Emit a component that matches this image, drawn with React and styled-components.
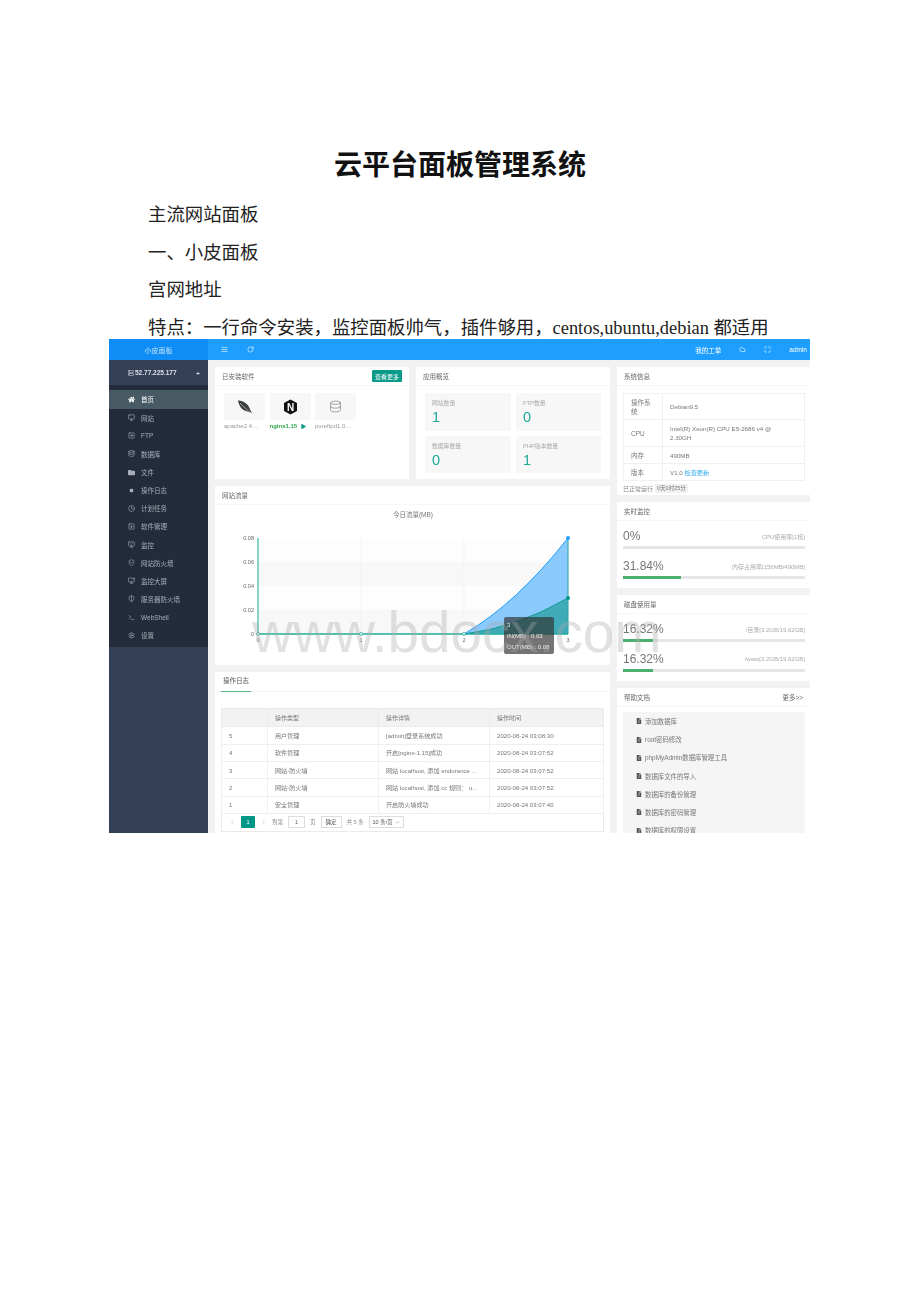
import styled, { createGlobalStyle } from "styled-components";
import { FaHome, FaFolder, FaCircle, FaCaretUp, FaPlay, FaFileAlt } from "react-icons/fa";
import {
  AlignJustify,
  RotateCw,
  Cloud,
  Maximize,
  Monitor,
  SquareArrowRight,
  Database,
  Clock,
  SquareArrowDown,
  MonitorCheck,
  ShieldCheck,
  MonitorDot,
  ShieldHalf,
  Terminal,
  Settings,
  Server,
  ChevronLeft,
  ChevronRight,
  ChevronDown,
} from "lucide-react";

const menu = [
  { label: "首页", icon: <FaHome />, active: true },
  { label: "网站", icon: <Monitor /> },
  { label: "FTP", icon: <SquareArrowRight /> },
  { label: "数据库", icon: <Database /> },
  { label: "文件", icon: <FaFolder /> },
  { label: "操作日志", icon: <FaCircle transform="scale(0.6)" /> },
  { label: "计划任务", icon: <Clock /> },
  { label: "软件管理", icon: <SquareArrowDown /> },
  { label: "监控", icon: <MonitorCheck /> },
  { label: "网站防火墙", icon: <ShieldCheck /> },
  { label: "监控大屏", icon: <MonitorDot /> },
  { label: "服务器防火墙", icon: <ShieldHalf /> },
  { label: "WebShell", icon: <Terminal /> },
  { label: "设置", icon: <Settings /> },
];

const logs = [
  ["5", "用户管理", "[admin]登录系统成功", "2020-08-24 03:08:30"],
  ["4", "软件管理", "开启[nginx-1.15]成功", "2020-08-24 03:07:52"],
  ["3", "网站-防火墙", "网站 localhost, 添加 endurance ...", "2020-08-24 03:07:52"],
  ["2", "网站-防火墙", "网站 localhost, 添加 cc 规则： u...", "2020-08-24 03:07:52"],
  ["1", "安全管理", "开启防火墙成功", "2020-08-24 03:07:40"],
];

const docs = [
  "添加数据库",
  "root密码修改",
  "phpMyAdmin数据库管理工具",
  "数据库文件的导入",
  "数据库的备份管理",
  "数据库的密码管理",
  "数据库的权限设置",
];

const stats = [
  ["网站数量", "1"],
  ["FTP数量", "0"],
  ["数据库数量", "0"],
  ["PHP版本数量", "1"],
];

function Meter({ value, label, percent, bar }) {
  return (
    <MeterBlock>
      <MeterRow>
        <MeterValue>{value}</MeterValue>
        <MeterLabel>{label}</MeterLabel>
      </MeterRow>
      <MeterTrack>
        <MeterFill style={{ width: bar ?? percent }} />
      </MeterTrack>
    </MeterBlock>
  );
}

function TrafficChart() {
  const xs = [258, 361, 464, 568];
  const ys = [
    [538, "0.08"],
    [562, "0.06"],
    [586, "0.04"],
    [610, "0.02"],
    [634, "0"],
  ];
  return (
    <ChartSvg viewBox="215 505 395 160">
      <rect x="258" y="538" width="310" height="24" fill="#fdfdfd" />
      <rect x="258" y="562" width="310" height="24" fill="#f8f8f8" />
      <rect x="258" y="586" width="310" height="24" fill="#fdfdfd" />
      <rect x="258" y="610" width="310" height="24" fill="#f8f8f8" />
      {xs.map((x) => (
        <line key={x} x1={x} x2={x} y1="538" y2="634" stroke="#f0f0f0" strokeWidth="0.6" />
      ))}
      <text x="413" y="517" textAnchor="middle" fontSize="6.5" fill="#777">
        今日流量(MB)
      </text>
      {ys.map(([y, label]) => (
        <text key={label} x="254" y={y + 2} textAnchor="end" fontSize="5.5" fill="#666">
          {label}
        </text>
      ))}
      {xs.map((x, i) => (
        <text key={x} x={x} y="642" textAnchor="middle" fontSize="5.5" fill="#666">
          {i}
        </text>
      ))}
      <path d="M464 634 Q516 604 568 538 L568 634 Z" fill="#8ac9fb" />
      <path d="M464 634 Q516 628 568 598 L568 634 Z" fill="#3faab8" />
      <path d="M464 634 Q516 604 568 538" fill="none" stroke="#1e9fff" strokeWidth="1" />
      <path d="M464 634 Q516 628 568 598" fill="none" stroke="#0f9a8c" strokeWidth="1" />
      <line x1="568" x2="568" y1="538" y2="634" stroke="#2aa6a0" strokeWidth="1" />
      <line x1="258" x2="258" y1="538" y2="634" stroke="#62c5b6" strokeWidth="1.5" />
      <line x1="258" x2="568" y1="634" y2="634" stroke="#1fab9c" strokeWidth="1.4" />
      {xs.slice(0, 3).map((x) => (
        <circle key={x} cx={x} cy="634" r="1.5" fill="#fff" stroke="#1fab9c" strokeWidth="0.8" />
      ))}
      <circle cx="568" cy="538" r="2" fill="#1e9fff" />
      <circle cx="568" cy="598" r="2" fill="#009688" />
    </ChartSvg>
  );
}

export default function App() {
  return (
    <Page>
      <GlobalStyle />
      <Title>云平台面板管理系统</Title>
      <Paragraph>主流网站面板</Paragraph>
      <Paragraph>一、小皮面板</Paragraph>
      <Paragraph>宫网地址</Paragraph>
      <Paragraph>特点：一行命令安装，监控面板帅气，插件够用，centos,ubuntu,debian 都适用</Paragraph>

      <Shot>
        <TopBar>
          <Logo>小皮面板</Logo>
          <TopNav>
            <TopIcons>
              <AlignJustify />
              <RotateCw />
            </TopIcons>
            <TopLinks>
              <span>我的工单</span>
              <Cloud />
              <Maximize />
              <span>admin</span>
            </TopLinks>
          </TopNav>
        </TopBar>

        <Body>
          <Sidebar>
            <UserBlock>
              <UserIp>
                <Server />
                52.77.225.177
              </UserIp>
              <FaCaretUp />
            </UserBlock>
            <MenuList>
              {menu.map((item) => (
                <MenuItem key={item.label} $active={item.active}>
                  {item.icon}
                  <span>{item.label}</span>
                </MenuItem>
              ))}
            </MenuList>
          </Sidebar>

          <Main>
            <LeftColumn>
              <TopRow>
                <Card>
                  <CardHead>
                    已安装软件
                    <MoreButton>查看更多</MoreButton>
                  </CardHead>
                  <Tiles>
                    <Software>
                      <Tile>
                        <svg width="16" height="16" viewBox="0 0 16 16">
                          <path d="M1 1.5C5 1.5 10 4 12 8c1 2 1.5 3.5 3 6.5-2.5-1.5-4-2-6-2.5C5 11 2 7 1 1.5Z" fill="#3a3f3f" />
                          <path d="M3 4c3 3 6 6 11 10" stroke="#fff" strokeWidth="0.5" fill="none" />
                        </svg>
                      </Tile>
                      <SoftName>apache2.4....</SoftName>
                    </Software>
                    <Software>
                      <Tile>
                        <svg width="15" height="16" viewBox="0 0 15 16">
                          <polygon points="7.5,0.5 14,4 14,12 7.5,15.5 1,12 1,4" fill="#111" />
                          <text x="7.5" y="11.5" textAnchor="middle" fontSize="10" fontWeight="700" fill="#fff">
                            N
                          </text>
                        </svg>
                      </Tile>
                      <SoftName $running>
                        nginx1.15 <FaPlay />
                      </SoftName>
                    </Software>
                    <Software>
                      <Tile>
                        <Database size={13} strokeWidth={1.2} color="#777" />
                      </Tile>
                      <SoftName>pureftpd1.0....</SoftName>
                    </Software>
                  </Tiles>
                </Card>

                <Card>
                  <CardHead>应用概览</CardHead>
                  <StatGrid>
                    {stats.map(([label, value]) => (
                      <StatTile key={label}>
                        <StatLabel>{label}</StatLabel>
                        <StatValue>{value}</StatValue>
                      </StatTile>
                    ))}
                  </StatGrid>
                </Card>
              </TopRow>

              <ChartCard>
                <CardHead>网站流量</CardHead>
                <ChartBody>
                  <TrafficChart />
                  <Tooltip>
                    3
                    <br />
                    IN(MB) : 0.03
                    <br />
                    OUT(MB) : 0.08
                  </Tooltip>
                </ChartBody>
              </ChartCard>

              <Card>
                <TabHead>
                  <Tab>操作日志</Tab>
                </TabHead>
                <LogWrap>
                  <LogTable>
                    <thead>
                      <tr>
                        <LogTh $w={46} />
                        <LogTh $w={111}>操作类型</LogTh>
                        <LogTh $w={111}>操作详情</LogTh>
                        <LogTh>操作时间</LogTh>
                      </tr>
                    </thead>
                    <tbody>
                      {logs.map((row) => (
                        <tr key={row[0]}>
                          {row.map((cell) => (
                            <LogTd key={cell}>{cell}</LogTd>
                          ))}
                        </tr>
                      ))}
                    </tbody>
                  </LogTable>
                  <Pager>
                    <PagerArrow>
                      <ChevronLeft />
                    </PagerArrow>
                    <PageCurrent>1</PageCurrent>
                    <PagerArrow>
                      <ChevronRight />
                    </PagerArrow>
                    <span>到第</span>
                    <PageInput>1</PageInput>
                    <span>页</span>
                    <PageButton>确定</PageButton>
                    <span>共 5 条</span>
                    <PageSelect>
                      10 条/页
                      <ChevronDown />
                    </PageSelect>
                  </Pager>
                </LogWrap>
              </Card>
            </LeftColumn>

            <RightColumn>
              <Card>
                <CardHead>系统信息</CardHead>
                <InfoWrap>
                  <InfoTable>
                    <tbody>
                      <tr>
                        <InfoKey $h={26}>操作系统</InfoKey>
                        <InfoValue>Debian9.5</InfoValue>
                      </tr>
                      <tr>
                        <InfoKey $h={27}>CPU</InfoKey>
                        <InfoValue>
                          Intel(R) Xeon(R) CPU E5-2686 v4 @
                          <br />
                          2.30GH
                        </InfoValue>
                      </tr>
                      <tr>
                        <InfoKey $h={17}>内存</InfoKey>
                        <InfoValue>490MB</InfoValue>
                      </tr>
                      <tr>
                        <InfoKey $h={17}>版本</InfoKey>
                        <InfoValue>
                          V1.0 <UpdateLink>检查更新</UpdateLink>
                        </InfoValue>
                      </tr>
                    </tbody>
                  </InfoTable>
                  <Uptime>
                    已正常运行 <UptimeBadge>0天0时25分</UptimeBadge>
                  </Uptime>
                </InfoWrap>
              </Card>

              <Card>
                <CardHead>实时监控</CardHead>
                <MeterList>
                  <Meter value="0%" label="CPU使用率[1核]" percent="0%" />
                  <Meter value="31.84%" label="内存占用率[156MB/490MB]" percent="31.84%" />
                </MeterList>
              </Card>

              <Card>
                <CardHead>磁盘使用量</CardHead>
                <MeterList>
                  <Meter value="16.32%" label="/目录[3.2GB/19.62GB]" percent="16.32%" />
                  <Meter value="16.32%" label="/www[3.2GB/19.62GB]" percent="16.32%" />
                </MeterList>
              </Card>

              <Card>
                <CardHead>
                  帮助文档
                  <MoreLink>更多&gt;&gt;</MoreLink>
                </CardHead>
                <DocBox>
                  {docs.map((doc) => (
                    <DocItem key={doc}>
                      <FaFileAlt />
                      {doc}
                    </DocItem>
                  ))}
                </DocBox>
              </Card>
            </RightColumn>
          </Main>
        </Body>

        <Watermark>www.bdocx.com</Watermark>
      </Shot>
    </Page>
  );
}

const GlobalStyle = createGlobalStyle`
  html, body {
    margin: 0;
    padding: 0;
    background: #fff;
  }
  * {
    box-sizing: border-box;
  }
`;

const Page = styled.div`
  min-height: 1302px;
  padding-top: 147px;
  font-family: "Liberation Serif", "Noto Sans CJK SC", serif;
  color: #111;
`;

const Title = styled.h1`
  margin: 0 0 19px;
  font-size: 28px;
  line-height: 38px;
  font-weight: 700;
  text-align: center;
`;

const Paragraph = styled.p`
  margin: 0 0 15.6px 148px;
  font-size: 18.4px;
  line-height: 22px;
  white-space: nowrap;
  color: #222;
`;

const Shot = styled.div`
  position: relative;
  width: 701px;
  height: 494px;
  margin: -15px 0 0 109px;
  display: flex;
  flex-direction: column;
  overflow: hidden;
  background: #f2f2f2;
  font-family: "Liberation Sans", "Noto Sans CJK SC", sans-serif;
  font-size: 6.5px;
  color: #666;
  filter: blur(0.5px);
`;

const TopBar = styled.div`
  display: flex;
  height: 21px;
  flex: none;
  color: #fff;
`;

const Logo = styled.div`
  width: 99px;
  display: flex;
  align-items: center;
  justify-content: center;
  background: #0d8df5;
  color: rgba(255, 255, 255, 0.75);
  font-size: 7px;
`;

const TopNav = styled.div`
  flex: 1;
  display: flex;
  align-items: center;
  justify-content: space-between;
  padding: 0 3px 0 13px;
  background: #1e9fff;
  svg {
    width: 7px;
    height: 7px;
  }
`;

const TopIcons = styled.div`
  display: flex;
  gap: 19px;
`;

const TopLinks = styled.div`
  display: flex;
  align-items: center;
  gap: 18px;
`;

const Body = styled.div`
  flex: 1;
  display: flex;
  min-height: 0;
`;

const Sidebar = styled.aside`
  width: 99px;
  flex: none;
  background: #343f58;
`;

const UserBlock = styled.div`
  height: 25px;
  display: flex;
  align-items: center;
  justify-content: space-between;
  padding: 0 7px 0 19px;
  color: #dfe2e8;
  svg {
    width: 6px;
    height: 6px;
  }
`;

const UserIp = styled.div`
  display: flex;
  align-items: center;
  gap: 1px;
  font-weight: 700;
`;

const MenuList = styled.nav`
  padding: 5px 0 3px;
  background: #242c3c;
`;

const MenuItem = styled.div`
  height: 18.15px;
  display: flex;
  align-items: center;
  gap: 6px;
  padding-left: 19px;
  background: ${(p) => (p.$active ? "#485a64" : "transparent")};
  color: ${(p) => (p.$active ? "#fff" : "#a8aeb9")};
  svg {
    width: 7px;
    height: 7px;
    flex: none;
  }
`;

const Main = styled.main`
  flex: 1;
  display: flex;
  gap: 7px;
  padding-top: 7px;
  padding-left: 7px;
  min-width: 0;
`;

const LeftColumn = styled.div`
  width: 395px;
  flex: none;
  display: flex;
  flex-direction: column;
  gap: 7px;
  > * {
    flex: none;
  }
`;

const RightColumn = styled.div`
  flex: 1;
  display: flex;
  flex-direction: column;
  gap: 7px;
  min-width: 0;
  > * {
    flex: none;
  }
`;

const TopRow = styled.div`
  display: grid;
  grid-template-columns: 194px 194px;
  gap: 7px;
  height: 112px;
`;

const Card = styled.section`
  background: #fff;
`;

const ChartCard = styled(Card)`
  height: 179px;
`;

const CardHead = styled.header`
  height: 19px;
  display: flex;
  align-items: center;
  justify-content: space-between;
  padding: 0 7px;
  border-bottom: 1px solid #f6f6f6;
  color: #666;
  font-size: 6.5px;
`;

const MoreButton = styled.span`
  padding: 1.5px 3px;
  background: #0a9a8a;
  border-radius: 1px;
  color: #fff;
  font-size: 6px;
`;

const MoreLink = styled.span`
  color: #666;
`;

const Tiles = styled.div`
  display: flex;
  gap: 4.5px;
  padding: 7px 0 0 9px;
`;

const Software = styled.div`
  width: 41px;
`;

const Tile = styled.div`
  height: 27px;
  display: flex;
  align-items: center;
  justify-content: center;
  background: #f7f7f7;
`;

const SoftName = styled.div`
  margin-top: 3px;
  display: flex;
  align-items: center;
  gap: 4px;
  white-space: nowrap;
  font-size: 6px;
  color: ${(p) => (p.$running ? "#2fa84f" : "#999")};
  font-weight: ${(p) => (p.$running ? 700 : 400)};
  svg {
    width: 5px;
    height: 5px;
    color: #0a9a8a;
  }
`;

const StatGrid = styled.div`
  display: grid;
  grid-template-columns: 86px 85px;
  grid-auto-rows: 37.5px;
  gap: 5px;
  padding: 7px 0 0 9px;
`;

const StatTile = styled.div`
  padding: 5px 7px;
  background: #f7f7f7;
`;

const StatLabel = styled.div`
  font-size: 5.8px;
  color: #aaa;
`;

const StatValue = styled.div`
  margin-top: 3px;
  font-size: 14.5px;
  line-height: 15px;
  color: #1da896;
`;

const ChartBody = styled.div`
  position: relative;
`;

const ChartSvg = styled.svg`
  display: block;
  width: 395px;
  height: 160px;
`;

const Tooltip = styled.div`
  position: absolute;
  left: 289px;
  top: 112px;
  width: 50px;
  height: 37px;
  padding: 3px;
  background: rgba(50, 50, 50, 0.68);
  border-radius: 2px;
  color: #eee;
  font-size: 6px;
  line-height: 11px;
  white-space: nowrap;
`;

const TabHead = styled.div`
  height: 20px;
  padding-left: 6px;
  border-bottom: 1px solid #f6f6f6;
`;

const Tab = styled.div`
  display: inline-block;
  height: 20px;
  width: 30px;
  text-align: center;
  line-height: 18px;
  border-bottom: 1px solid #5fb878;
  color: #555;
`;

const LogWrap = styled.div`
  padding: 16px 6px 4px;
`;

const LogTable = styled.table`
  width: 383px;
  table-layout: fixed;
  border-collapse: collapse;
`;

const LogTh = styled.th`
  width: ${(p) => (p.$w ? `${p.$w}px` : "auto")};
  height: 18px;
  padding: 0 7px;
  background: #f2f2f2;
  border: 0.5px solid #eaeaea;
  font-weight: 400;
  font-size: 6px;
  text-align: left;
  color: #777;
`;

const LogTd = styled.td`
  height: 17.3px;
  padding: 0 7px;
  border: 0.5px solid #efefef;
  font-size: 6.1px;
  color: #777;
  white-space: nowrap;
  overflow: hidden;
`;

const Pager = styled.div`
  height: 18px;
  width: 383px;
  display: flex;
  align-items: center;
  gap: 5px;
  padding-left: 7px;
  border: 0.5px solid #eaeaea;
  border-top: 0;
  font-size: 5.5px;
  color: #888;
`;

const PagerArrow = styled.span`
  display: flex;
  color: #bbb;
  svg {
    width: 7px;
    height: 7px;
  }
`;

const PageCurrent = styled.span`
  width: 14px;
  height: 12px;
  display: flex;
  align-items: center;
  justify-content: center;
  background: #009688;
  color: #fff;
  border-radius: 1px;
`;

const PageInput = styled.span`
  width: 17px;
  height: 12px;
  display: flex;
  align-items: center;
  justify-content: center;
  border: 0.5px solid #ddd;
  color: #666;
`;

const PageButton = styled(PageInput)`
  width: 21px;
  color: #555;
`;

const PageSelect = styled(PageInput)`
  width: 35px;
  gap: 2px;
  color: #555;
  svg {
    width: 5px;
    height: 5px;
  }
`;

const InfoWrap = styled.div`
  padding: 7px 5px 0 6px;
`;

const InfoTable = styled.table`
  width: 182px;
  table-layout: fixed;
  border-collapse: collapse;
`;

const InfoKey = styled.td`
  width: 39px;
  height: ${(p) => p.$h}px;
  padding: 0 7px;
  border: 0.5px solid #f0f0f0;
  line-height: 9px;
  font-size: 6.5px;
  color: #777;
`;

const InfoValue = styled.td`
  padding: 0 7px;
  border: 0.5px solid #f0f0f0;
  line-height: 9px;
  font-size: 6.2px;
  color: #777;
`;

const UpdateLink = styled.span`
  color: #2aa8f0;
`;

const Uptime = styled.div`
  height: 14px;
  display: flex;
  align-items: center;
  gap: 2px;
  font-size: 6px;
  color: #888;
`;

const UptimeBadge = styled.span`
  padding: 0.5px 2px;
  background: #f0f0f0;
  font-size: 5.5px;
  color: #777;
`;

const MeterList = styled.div`
  display: flex;
  flex-direction: column;
  gap: 10.5px;
  padding: 8px 5px 9.5px 6px;
`;

const MeterBlock = styled.div`
  display: flex;
  flex-direction: column;
  gap: 3px;
`;

const MeterRow = styled.div`
  display: flex;
  align-items: center;
  justify-content: space-between;
`;

const MeterValue = styled.span`
  font-size: 12px;
  line-height: 14px;
  color: #777;
`;

const MeterLabel = styled.span`
  font-size: 6px;
  color: #aaa;
`;

const MeterTrack = styled.div`
  height: 2.5px;
  background: #e6e6e6;
`;

const MeterFill = styled.div`
  height: 100%;
  background: #4caf6e;
`;

const DocBox = styled.div`
  margin: 5px 5px 0 6px;
  padding: 0 0 0 13px;
  background: #f5f5f5;
`;

const DocItem = styled.div`
  height: 18.2px;
  display: flex;
  align-items: center;
  gap: 3px;
  font-size: 6.4px;
  color: #777;
  svg {
    width: 6px;
    height: 6px;
    color: #555;
  }
`;

const Watermark = styled.div`
  position: absolute;
  left: 143px;
  top: 265px;
  font-size: 56.7px;
  line-height: 57px;
  color: rgba(170, 170, 170, 0.35);
  white-space: nowrap;
  pointer-events: none;
`;
